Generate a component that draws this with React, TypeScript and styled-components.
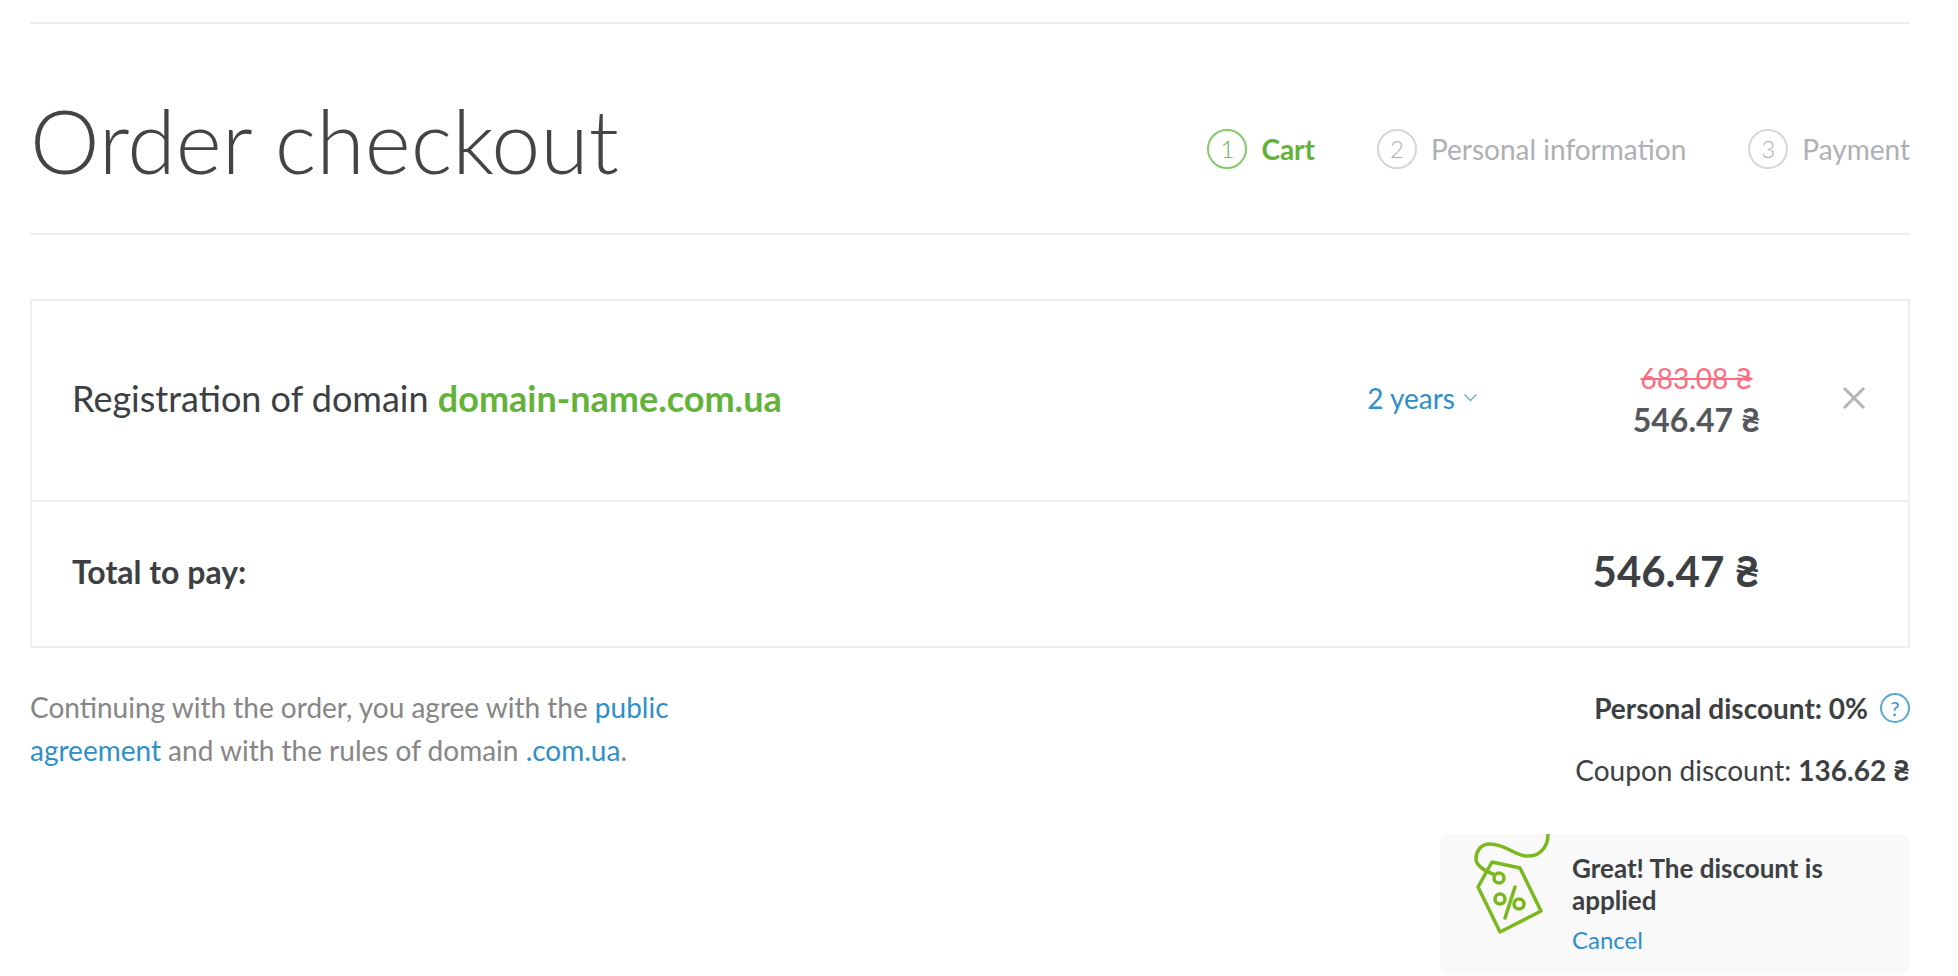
import styled, { createGlobalStyle } from "styled-components";

const steps = [
  { num: 1, label: "Cart", active: true },
  { num: 2, label: "Personal information", active: false },
  { num: 3, label: "Payment", active: false },
];

export default function App() {
  return (
    <Page>
      <GlobalStyle />
      <Header>
        <Title>Order checkout</Title>
        <Steps>
          {steps.map((s) => (
            <Step key={s.num} $active={s.active}>
              <StepNum $active={s.active}>{s.num}</StepNum>
              {s.label}
            </Step>
          ))}
        </Steps>
      </Header>

      <Cart>
        <ItemRow>
          <ItemName>
            Registration of domain <DomainName>domain-name.com.ua</DomainName>
          </ItemName>
          <Period>
            2 years
            <svg width="15" height="9" viewBox="0 0 15 9" fill="none">
              <path d="M1.5 1.5 7.5 7.5l6-6" stroke="#6aaed8" strokeWidth="1.4" />
            </svg>
          </Period>
          <Prices>
            <OldPrice>683.08 ₴</OldPrice>
            <NewPrice>546.47 ₴</NewPrice>
          </Prices>
          <RemoveButton>
            <svg width="24" height="24" viewBox="0 0 24 24" fill="none">
              <path d="M2 2l20 20M22 2 2 22" stroke="#b5b5b5" strokeWidth="3" />
            </svg>
          </RemoveButton>
        </ItemRow>
        <TotalRow>
          <TotalLabel>Total to pay:</TotalLabel>
          <TotalAmount>546.47 ₴</TotalAmount>
        </TotalRow>
      </Cart>

      <Bottom>
        <Note>
          Continuing with the order, you agree with the <NoteLink>public agreement</NoteLink> and
          with the rules of domain <NoteLink>.com.ua</NoteLink>.
        </Note>
        <Discounts>
          <PersonalDiscount>
            Personal discount: 0%
            <HelpBadge>?</HelpBadge>
          </PersonalDiscount>
          <CouponDiscount>
            Coupon discount: <b>136.62 ₴</b>
          </CouponDiscount>
          <CouponCard>
            <TagIcon viewBox="20 9 80 102" fill="none" stroke="#7ab81e" strokeWidth="3.5" strokeLinejoin="round" strokeLinecap="round">
              <path d="M98 9C98 24 88 32 76 31 64 30 55 19 40 19 30 19 26 27 26 34 26 42 38 47 45 50" />
              <path d="M42 37 70 43 91 86 50 107 28 62Z" />
              <circle cx="49" cy="53" r="5" />
              <circle cx="50" cy="74" r="5" />
              <circle cx="69" cy="79" r="5" />
              <path d="M65 62 55 93" />
            </TagIcon>
            <CouponText>
              <CouponTitle>Great! The discount is applied</CouponTitle>
              <CancelLink>Cancel</CancelLink>
            </CouponText>
          </CouponCard>
        </Discounts>
      </Bottom>
    </Page>
  );
}

const GlobalStyle = createGlobalStyle`
  html, body {
    margin: 0;
    padding: 0;
    background: #fff;
    font-family: Lato, "Liberation Sans", sans-serif;
    color: #3d4043;
  }
`;

const Page = styled.div`
  box-sizing: border-box;
  height: 976px;
  overflow: hidden;
  padding: 22px 48px 0 30px;
`;

const Header = styled.header`
  box-sizing: border-box;
  height: 213px;
  display: flex;
  justify-content: space-between;
  align-items: center;
  padding-top: 40px;
  border-top: 2px solid #eee;
  border-bottom: 2px solid #eee;
`;

const Title = styled.h1`
  margin: 0 0 18px;
  font-size: 88px;
  font-weight: 300;
  line-height: 1;
  color: #444;
`;

const Steps = styled.div`
  display: flex;
  align-items: center;
  gap: 62px;
`;

const Step = styled.div<{ $active: boolean }>`
  display: flex;
  align-items: center;
  gap: 14px;
  font-size: 28px;
  font-weight: ${(p) => (p.$active ? 700 : 400)};
  color: ${(p) => (p.$active ? "#63b33b" : "#adb0b4")};
`;

const StepNum = styled.span<{ $active: boolean }>`
  box-sizing: border-box;
  width: 40px;
  height: 40px;
  display: grid;
  place-items: center;
  border-radius: 50%;
  border: 2px solid ${(p) => (p.$active ? "#84c96b" : "#d6d6d6")};
  font-size: 24px;
  font-weight: 300;
`;

const Cart = styled.section`
  margin-top: 64px;
  border: 2px solid #eee;
`;

const ItemRow = styled.div`
  box-sizing: border-box;
  height: 201px;
  display: flex;
  align-items: center;
  padding: 0 42px 6px 40px;
  border-bottom: 2px solid #eee;
`;

const ItemName = styled.div`
  flex: 1;
  font-size: 36px;
  color: #3d4043;
`;

const DomainName = styled.b`
  color: #63b33b;
`;

const Period = styled.div`
  display: flex;
  align-items: center;
  gap: 8px;
  font-size: 28px;
  color: #2f8fc9;
`;

const Prices = styled.div`
  width: 127px;
  margin: 6px 0 0 155px;
  display: flex;
  flex-direction: column;
  align-items: center;
  white-space: nowrap;
`;

const OldPrice = styled.div`
  font-size: 28px;
  line-height: 38px;
  color: #ff6b81;
  text-decoration: line-through;
`;

const NewPrice = styled.div`
  font-size: 32px;
  line-height: 46px;
  font-weight: 700;
  color: #54585c;
`;

const RemoveButton = styled.button`
  margin-left: 82px;
  padding: 0;
  border: 0;
  background: transparent;
  display: grid;
  place-items: center;
`;

const TotalRow = styled.div`
  box-sizing: border-box;
  height: 144px;
  display: flex;
  align-items: center;
  justify-content: space-between;
  padding: 0 148px 6px 40px;
`;

const TotalLabel = styled.div`
  font-size: 32px;
  font-weight: 700;
`;

const TotalAmount = styled.div`
  font-size: 42px;
  font-weight: 700;
`;

const Bottom = styled.div`
  display: flex;
  justify-content: space-between;
  align-items: flex-start;
  margin-top: 38px;
`;

const Note = styled.p`
  margin: 0;
  width: 700px;
  font-size: 28px;
  line-height: 43px;
  color: #868686;
`;

const NoteLink = styled.a`
  color: #2f8fc9;
`;

const Discounts = styled.div`
  display: flex;
  flex-direction: column;
  align-items: flex-end;
`;

const PersonalDiscount = styled.div`
  display: flex;
  align-items: center;
  gap: 12px;
  height: 43px;
  font-size: 28px;
  font-weight: 700;
`;

const HelpBadge = styled.span`
  box-sizing: border-box;
  width: 30px;
  height: 30px;
  display: grid;
  place-items: center;
  border-radius: 50%;
  border: 2px solid #56a8d8;
  color: #2f8fc9;
  font-size: 20px;
  font-weight: 400;
`;

const CouponDiscount = styled.div`
  margin-top: 20px;
  height: 43px;
  line-height: 43px;
  font-size: 28px;
`;

const CouponCard = styled.div`
  box-sizing: border-box;
  width: 470px;
  height: 141px;
  margin-top: 42px;
  display: flex;
  align-items: flex-start;
  gap: 22px;
  padding-left: 30px;
  border-radius: 10px;
  background: #f9f9f9;
`;

const TagIcon = styled.svg`
  flex: none;
  width: 80px;
  height: 102px;
`;

const CouponText = styled.div`
  padding-top: 18px;
  width: 300px;
`;

const CouponTitle = styled.div`
  font-size: 26px;
  line-height: 32px;
  font-weight: 700;
`;

const CancelLink = styled.a`
  display: block;
  margin-top: 9px;
  font-size: 24px;
  line-height: 30px;
  color: #2f8fc9;
`;
